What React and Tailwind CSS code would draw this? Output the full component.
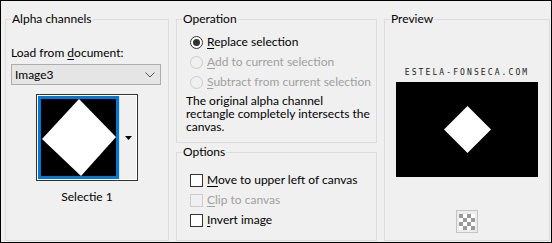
import React from 'react';

const Acc = ({ children }) => <span className="underline underline-offset-[2px]">{children}</span>;

function Radio({ checked, disabled, k, rest }) {
  return (
    <div className="flex items-center h-[20px] pl-[13px] gap-[4px] whitespace-nowrap">
      <span
        className={
          'w-[13px] h-[13px] rounded-full border flex items-center justify-center shrink-0 ' +
          (disabled ? 'border-[#cccccc] bg-[#f0f0f0]' : 'border-[#333333] bg-white')
        }
      >
        {checked && <span className="w-[7px] h-[7px] rounded-full bg-[#333333]" />}
      </span>
      <span className={disabled ? 'text-[#a0a0a0]' : 'text-black'}>
        <Acc>{k}</Acc>
        {rest}
      </span>
    </div>
  );
}

function Check({ disabled, k, rest }) {
  return (
    <div className="flex items-center h-[20px] pl-[13px] gap-[4px] whitespace-nowrap">
      <span
        className={
          'w-[13px] h-[13px] border shrink-0 ' +
          (disabled ? 'border-[#cccccc] bg-[#f0f0f0]' : 'border-[#333333] bg-white')
        }
      />
      <span className={disabled ? 'text-[#a0a0a0]' : 'text-black'}>
        <Acc>{k}</Acc>
        {rest}
      </span>
    </div>
  );
}

function Group({ title, className, children }) {
  return (
    <fieldset className={'border border-[#dcdcdc] ' + className}>
      <legend className="ml-[5px] px-[1px] h-[16px] leading-[16px] text-black">{title}</legend>
      {children}
    </fieldset>
  );
}

export default function App() {
  return (
    <div className="w-[552px] h-[243px] bg-[#f0f0f0] border border-black flex gap-[7px] pt-[10px] pl-[4px] pr-[1px] pb-[1px] font-['Lato',sans-serif] text-[12px] leading-[16px] text-black overflow-hidden">
      <Group title="Alpha channels" className="w-[164px] shrink-0">
        <div className="pl-[5px] pt-[18px]">
          <div className="whitespace-nowrap">
            Load from <Acc>d</Acc>ocument:
          </div>
          <div className="mt-[3px] w-[150px] h-[21px] bg-[#e5e5e5] border border-[#adadad] flex items-center justify-between pl-[3px] pr-[5px]">
            <span>Image3</span>
            <svg width="10" height="6" viewBox="0 0 10 6">
              <path d="M0.5 0.5 L5 5 L9.5 0.5" fill="none" stroke="#555" strokeWidth="1" />
            </svg>
          </div>
          <div className="mt-[9px] ml-[25px] w-[102px] h-[87px] border border-[#333] bg-white flex p-[1px]">
            <div className="w-[81px] h-full border-[3px] border-[#0078d7] bg-black">
              <svg width="75" height="77" viewBox="0 0 75 77" className="block">
                <polygon points="38,0 75,38 40,77 1,40" fill="#fff" />
              </svg>
            </div>
            <div className="flex-1 bg-[#f0f0f0] border-l border-[#e0e0e0] flex items-center justify-center">
              <svg width="7" height="4" viewBox="0 0 7 4">
                <polygon points="0,0 7,0 3.5,4" fill="#000" />
              </svg>
            </div>
          </div>
        </div>
        <div className="mt-[8px] text-center">Selectie 1</div>
      </Group>

      <div className="w-[201px] shrink-0 flex flex-col gap-[1px]">
        <Group title="Operation" className="h-[132px]">
          <div className="pt-[5px]">
            <Radio checked k="R" rest="eplace selection" />
            <Radio disabled k="A" rest="dd to current selection" />
            <Radio disabled k="S" rest="ubtract from current selection" />
          </div>
          <div className="pl-[9px] mt-[2px] leading-[13px] whitespace-nowrap">
            The original alpha channel
            <br />
            rectangle completely intersects the
            <br />
            canvas.
          </div>
        </Group>
        <Group title="Options" className="flex-1">
          <div className="pt-[10px]">
            <Check k="M" rest="ove to upper left of canvas" />
            <Check disabled k="C" rest="lip to canvas" />
            <Check k="I" rest="nvert image" />
          </div>
        </Group>
      </div>

      <Group title="Preview" className="flex-1 flex flex-col items-center">
        <div className="flex flex-col items-center">
          <div className="mt-[41px] h-[10px] leading-[10px] text-[8px] tracking-[2.1px] font-['DejaVu_Sans_Mono',monospace] text-[#222]">
            ESTELA-FONSECA.COM
          </div>
          <div className="mt-[4px] w-[142px] h-[95px] bg-black flex items-center justify-center">
            <svg width="47" height="47" viewBox="0 0 47 47">
              <polygon points="23.5,0 47,23.5 23.5,47 0,23.5" fill="#fff" />
            </svg>
          </div>
          <div className="mt-[33px] w-[22px] h-[23px] border border-[#c4c4c4] bg-[#ececec] flex items-center justify-center">
            <svg width="16" height="16" viewBox="0 0 16 16">
              <rect width="16" height="16" fill="#fff" />
              <rect x="0" y="0" width="4" height="4" fill="#9a9a9a" />
              <rect x="8" y="0" width="4" height="4" fill="#9a9a9a" />
              <rect x="4" y="4" width="4" height="4" fill="#9a9a9a" />
              <rect x="12" y="4" width="4" height="4" fill="#9a9a9a" />
              <rect x="0" y="8" width="4" height="4" fill="#9a9a9a" />
              <rect x="8" y="8" width="4" height="4" fill="#9a9a9a" />
              <rect x="4" y="12" width="4" height="4" fill="#9a9a9a" />
              <rect x="12" y="12" width="4" height="4" fill="#9a9a9a" />
            </svg>
          </div>
        </div>
      </Group>
    </div>
  );
}
